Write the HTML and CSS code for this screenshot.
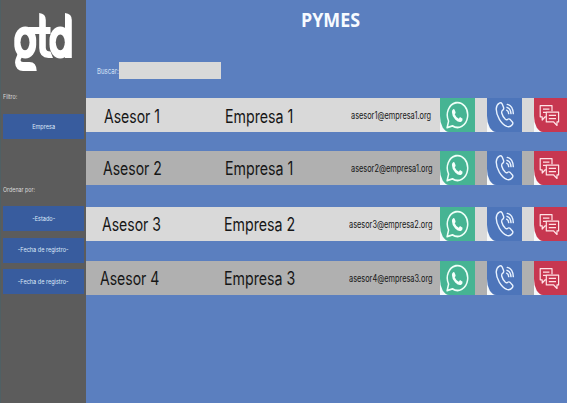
FILE: index.html
```html
<!DOCTYPE html>
<html lang="es">
<head>
<meta charset="utf-8">
<title>PYMES</title>
<link rel="stylesheet" href="styles.css">
</head>
<body>
<svg class="defs" width="0" height="0" aria-hidden="true">
  <symbol id="whatsapp" viewBox="1 0 23 23" preserveAspectRatio="none">
    <path d="M2.1 21.9 3.6 16.5A10.2 10.2 0 1 1 7.500 20.400Z" fill="none" stroke="#effff8" stroke-width="1.5" stroke-linejoin="round"/>
    <path d="M8.2 6.800Q9 6.300 9.600 7.100L10.600 9.200Q10.800 9.800 9.700 10.900 11 13.600 13.800 14.600L15 13.200 17.600 14.600Q17.800 16.600 15.700 17.200 13.300 17.700 10.200 15.100 6.800 12 6.900 9 7 7.500 8.200 6.800Z" fill="#f5fffb"/>
  </symbol>
  <symbol id="phone" viewBox="0 0 20 28" preserveAspectRatio="none">
    <g fill="none" stroke="#e8f2ff" stroke-width="1.4" stroke-linecap="round" stroke-linejoin="round">
      <path d="M4.3 2.200Q6 1.200 7.100 2.800L8.500 6.300Q9.200 8.200 7.600 9.300 6.300 10.300 6.800 12.200 7.800 16 10.400 18.300 11.400 19.100 12.600 18.300 14 17.300 15.300 18.600L17.400 21Q18.400 22.400 17.200 23.800 15 26.500 11.800 25.400 7.500 23.600 4.400 18.300 1.200 12.700 1.200 8 1.500 3.700 4.300 2.200Z"/>
      <path d="M11.600 9.200Q13.500 10 13.700 12.600M12 6.300Q15.600 7.300 16 12.600M12.300 3.400Q17.800 4.700 18.300 12.600"/>
    </g>
  </symbol>
  <symbol id="chat" viewBox="0 0 21 22" preserveAspectRatio="none">
    <g fill="none" stroke="#ffe3e6" stroke-width="1.2" stroke-linejoin="round">
      <path d="M7 12.200H6.200L3.200 15.300V12.200H1.200V1.500H13V7M4 4.800H10.400M4 8H7"/>
      <path d="M7.300 7.700H19.600V17.200H18V20.500L14.700 17.200H7.300ZM9.800 10.800H17M9.800 14H17"/>
    </g>
  </symbol>
</svg>
<div class="app">
  <aside class="sidebar">
    <svg class="logo" viewBox="0 0 60 60" role="img" aria-label="gtd">
      <rect class="fill" x=".3" y="13.500" width="21.900" height="32" rx="10.900" ry="14"/>
      <rect class="fill" x="35.500" y="13.500" width="21.500" height="32" rx="10.700" ry="14"/>
      <ellipse class="cut" cx="11" cy="29.300" rx="4.500" ry="7.900"/>
      <ellipse class="cut" cx="46.300" cy="29.300" rx="4.500" ry="7.900"/>
      <path class="fill" d="M25.200 0Q31.800 .5 31.800 7V14H36.500V21H31.800V35Q32 38.500 36.500 38.500L39 45H34.500Q25.200 44.500 25.200 35V21H20V14H25.200Z"/>
      <path class="fill" d="M51 0Q57.800 .5 57.800 7V45H51Z"/>
      <path class="fill" d="M14 13.900H24V21H18Z"/>
      <path class="fill" d="M4 40 2 45Q-.5 51 3.500 56 5.500 58 9 58H22.700Q22.500 49 15.500 49H9Q6.500 49 6.500 47L8.500 43Z"/>
    </svg>
    <p class="label"><span>Filtro:</span></p>
    <button class="filter empresa"><span>Empresa</span></button>
    <p class="label order"><span>Ordenar por:</span></p>
    <button class="filter"><span>-Estado-</span></button>
    <button class="filter"><span>-Fecha de registro-</span></button>
    <button class="filter"><span>-Fecha de registro-</span></button>
  </aside>
  <main class="main">
    <h1><span>PYMES</span></h1>
    <div class="search"><label for="q">Buscar:</label><input id="q" type="text"></div>
    <div class="list">
      <div class="row r1">
        <div class="name"><span>Asesor 1</span></div><div class="company"><span>Empresa 1</span></div><div class="mail"><span>asesor1@empresa1.org</span></div>
        <div class="tile green"><svg><use href="#whatsapp"/></svg></div><div class="tile blue"><svg><use href="#phone"/></svg></div><div class="tile red"><svg><use href="#chat"/></svg></div>
      </div>
      <div class="row r2 dark">
        <div class="name"><span>Asesor 2</span></div><div class="company"><span>Empresa 1</span></div><div class="mail"><span>asesor2@empresa1.org</span></div>
        <div class="tile green"><svg><use href="#whatsapp"/></svg></div><div class="tile blue"><svg><use href="#phone"/></svg></div><div class="tile red"><svg><use href="#chat"/></svg></div>
      </div>
      <div class="row r3">
        <div class="name"><span>Asesor 3</span></div><div class="company"><span>Empresa 2</span></div><div class="mail"><span>asesor3@empresa2.org</span></div>
        <div class="tile green"><svg><use href="#whatsapp"/></svg></div><div class="tile blue"><svg><use href="#phone"/></svg></div><div class="tile red"><svg><use href="#chat"/></svg></div>
      </div>
      <div class="row r4 dark">
        <div class="name"><span>Asesor 4</span></div><div class="company"><span>Empresa 3</span></div><div class="mail"><span>asesor4@empresa3.org</span></div>
        <div class="tile green"><svg><use href="#whatsapp"/></svg></div><div class="tile blue"><svg><use href="#phone"/></svg></div><div class="tile red"><svg><use href="#chat"/></svg></div>
      </div>
    </div>
  </main>
</div>
</body>
</html>
```
FILE: styles.css
```css
* { box-sizing: border-box; }
body { margin: 0; font-family: Inter, "Liberation Sans", sans-serif; }
.defs { display: block; }
.app { display: flex; width: 567px; height: 403px; overflow: hidden; background: #5b7fbf; }
.sidebar { width: 86px; background: #5c5c5c; border-left: 1px solid #4f6064; flex: none; }
.logo { display: block; width: 60px; height: 60px; margin: 13px 0 0 13px; }
.logo .fill { fill: #fff; }
.logo .cut { fill: #5c5c5c; }
.label { margin: 18px 0 0 2px; height: 12px; font-size: 6.6px; line-height: 12px; color: #dedede; white-space: nowrap; }
.label span { display: inline-block; transform: scaleX(.81); transform-origin: left; }
.label.order { margin: 45px 0 10px 2px; }
.filter { display: flex; align-items: center; justify-content: center; width: 81px; height: 25px; margin: 0 0 6.500px 2px; padding: 0; border: 0; background: #385c9e; color: #dfeafa; font: 6.6px Inter, sans-serif; white-space: nowrap; }
.filter span { transform: scaleX(.84); }
.filter.empresa { margin: 11px 0 0 2px; }
.main { flex: 1; min-width: 0; }
h1 { margin: 8px 0 0 215px; height: 25px; font: 700 19px/25px "Open Sans", sans-serif; color: #f7fbff; }
h1 span { display: inline-block; transform: scaleX(.94); transform-origin: left; }
.search { display: flex; align-items: center; height: 17px; margin: 29px 0 0 11px; }
.search label { width: 22px; font-size: 8px; color: #d4e1f6; white-space: nowrap; transform: scaleX(.76); transform-origin: left; }
.search input { width: 102px; height: 17px; padding: 0; border: 0; background: #d9d9d9; }
.list { padding-top: 19px; }
.row { display: flex; align-items: center; height: 34px; margin-bottom: 19px; background: #d9d9d9; color: #161616; white-space: nowrap; }
.row.dark { background: #b0b0b0; }
.r2 { margin-bottom: 22px; }
.r3 { margin-bottom: 20px; }
.row span { display: inline-block; transform-origin: left; }
.name { width: 139px; padding-left: 18px; font-size: 18px; }
.name span { transform: scaleX(.78); }
.r1 .name, .r1 .company { padding-top: 2px; }
.r2 .name { padding-left: 17px; }
.r3 .name { padding-left: 16px; }
.r4 .name { padding-left: 14px; }
.r3 .name, .r4 .name { width: 138px; }
.company { width: 126px; font-size: 18px; }
.company span { transform: scaleX(.79); }
.r3 .company, .r4 .company { width: 125px; }
.mail { width: 89px; font-size: 9.700px; }
.mail span { transform: scaleX(.76); }
.r3 .mail, .r4 .mail { width: 91px; }
.tile { position: relative; z-index: 0; flex: none; display: flex; align-items: center; justify-content: center; width: 35px; height: 34px; margin-right: 12px; background: linear-gradient(to right, #f5f8fa 10px, transparent 10px); }
.tile::before { content: ""; position: absolute; z-index: -1; inset: 0; border-radius: 0 0 0 9px / 0 0 0 16px; background: #46b493; }
.tile svg { width: 23px; height: 28px; }
.tile.blue::before { background: #4d75ba; }
.tile.blue svg { width: 20px; height: 28px; }
.tile.red { width: 33px; margin: 0; }
.tile.red::before { background: #c73750; }
.tile.red svg { width: 21px; height: 23px; margin-right: 2px; }
```
